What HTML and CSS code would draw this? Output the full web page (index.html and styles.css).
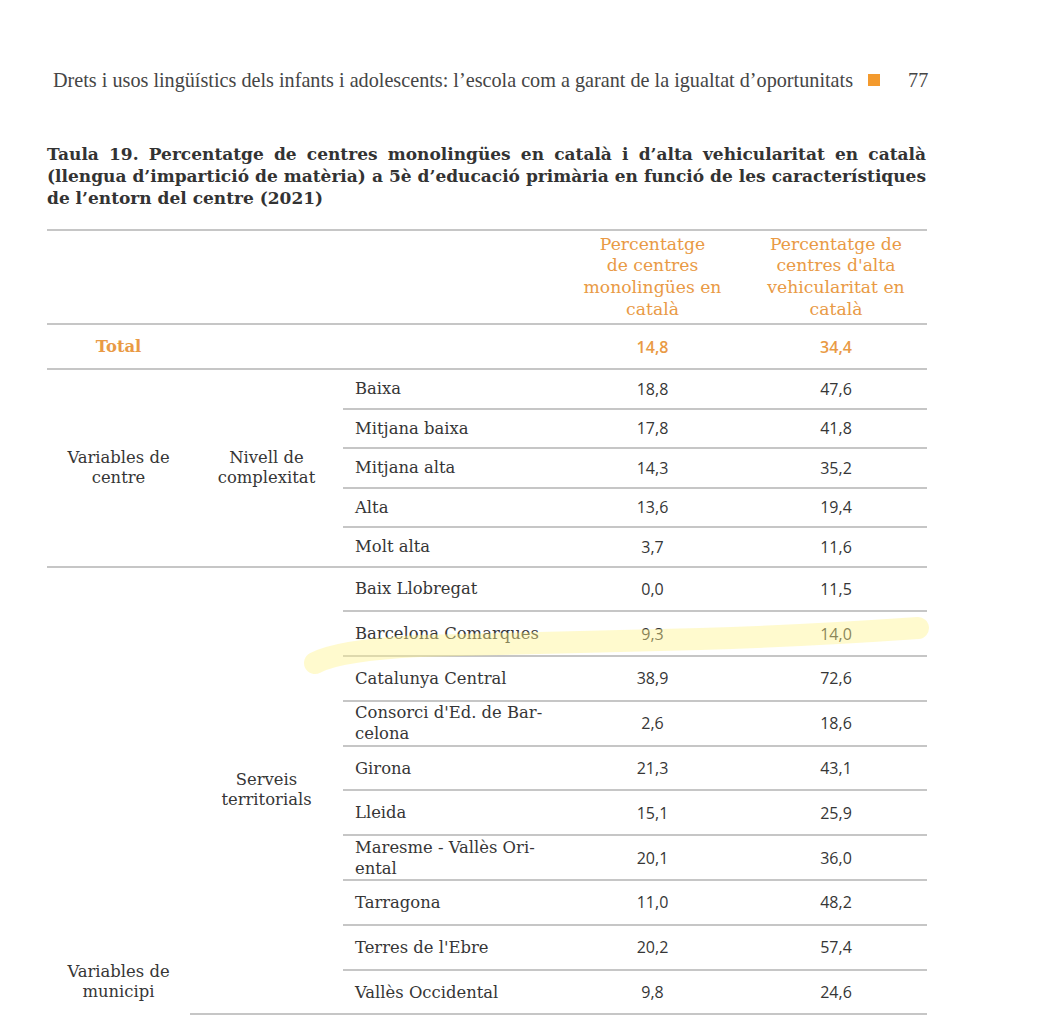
FILE: index.html
```html
<!DOCTYPE html>
<html lang="ca">
<head>
<meta charset="utf-8">
<title>Taula 19</title>
<link rel="stylesheet" href="styles.css">
</head>
<body>
<div class="page">
  <header class="running">
    <span class="run-title">Drets i usos lingüístics dels infants i adolescents: l’escola com a garant de la igualtat d’oportunitats</span>
    <span class="run-mark"></span>
    <span class="run-page">77</span>
  </header>

  <h1 class="caption">Taula 19. Percentatge de centres monolingües en català i d’alta vehicularitat en català (llengua d’impartició de matèria) a 5è d’educació primària en funció de les característiques de l’entorn del centre (2021)</h1>

  <table class="data">
    <colgroup>
      <col class="c1"><col class="c2"><col class="c3"><col class="c4"><col class="c5">
    </colgroup>
    <thead>
      <tr class="head-row">
        <th colspan="3"></th>
        <th class="h-val">Percentatge<br>de centres<br>monolingües en<br>català</th>
        <th class="h-val">Percentatge de<br>centres d'alta<br>vehicularitat en<br>català</th>
      </tr>
    </thead>
    <tbody>
      <tr class="total-row">
        <td class="total-label">Total</td>
        <td></td>
        <td></td>
        <td class="num total-num">14,8</td>
        <td class="num total-num">34,4</td>
      </tr>

      <tr class="row-s">
        <td class="group" rowspan="5">Variables de<br>centre</td>
        <td class="group" rowspan="5">Nivell de<br>complexitat</td>
        <td class="label">Baixa</td><td class="num">18,8</td><td class="num">47,6</td>
      </tr>
      <tr class="row-s"><td class="label">Mitjana baixa</td><td class="num">17,8</td><td class="num">41,8</td></tr>
      <tr class="row-s"><td class="label">Mitjana alta</td><td class="num">14,3</td><td class="num">35,2</td></tr>
      <tr class="row-s"><td class="label">Alta</td><td class="num">13,6</td><td class="num">19,4</td></tr>
      <tr class="row-s"><td class="label">Molt alta</td><td class="num">3,7</td><td class="num">11,6</td></tr>

      <tr class="row-l">
        <td class="group group-open" rowspan="10">Variables de<br>municipi</td>
        <td class="group" rowspan="10">Serveis<br>territorials</td>
        <td class="label">Baix Llobregat</td><td class="num">0,0</td><td class="num">11,5</td>
      </tr>
      <tr class="row-l"><td class="label">Barcelona Comarques</td><td class="num">9,3</td><td class="num">14,0</td></tr>
      <tr class="row-l"><td class="label">Catalunya Central</td><td class="num">38,9</td><td class="num">72,6</td></tr>
      <tr class="row-l"><td class="label two">Consorci d'Ed. de Bar-<br>celona</td><td class="num">2,6</td><td class="num">18,6</td></tr>
      <tr class="row-l"><td class="label">Girona</td><td class="num">21,3</td><td class="num">43,1</td></tr>
      <tr class="row-l"><td class="label">Lleida</td><td class="num">15,1</td><td class="num">25,9</td></tr>
      <tr class="row-l"><td class="label two">Maresme - Vallès Ori-<br>ental</td><td class="num">20,1</td><td class="num">36,0</td></tr>
      <tr class="row-l"><td class="label">Tarragona</td><td class="num">11,0</td><td class="num">48,2</td></tr>
      <tr class="row-l"><td class="label">Terres de l'Ebre</td><td class="num">20,2</td><td class="num">57,4</td></tr>
      <tr class="row-l"><td class="label">Vallès Occidental</td><td class="num">9,8</td><td class="num">24,6</td></tr>
    </tbody>
  </table>

  <svg class="highlight" width="1043" height="1016" viewBox="0 0 1043 1016" aria-hidden="true">
    <path d="M315,663 C330,655 360,649 420,646 C520,643 600,642 700,639 C800,636 860,632 918,628" fill="none" stroke="#fff48a" stroke-opacity="0.42" stroke-width="22" stroke-linecap="round"/>
  </svg>
</div>
</body>
</html>
```

FILE: styles.css
```css
html, body {
  margin: 0;
  padding: 0;
  background: #ffffff;
}

body {
  font-family: "DejaVu Serif", "Liberation Serif", serif;
  color: #363636;
}

.page {
  position: relative;
  width: 1043px;
  height: 1016px;
  overflow: hidden;
}

.running {
  display: flex;
  align-items: center;
  padding: 70px 0 0 53px;
  height: 20px;
  font-family: "Liberation Serif", serif;
  font-size: 20.2px;
  color: #454545;
}

.run-mark {
  width: 12px;
  height: 12px;
  background: #f39a2e;
  margin-left: 15px;
}

.run-page {
  margin-left: 28px;
}

.caption {
  margin: 53px 0 0 47px;
  width: 879px;
  font-family: "DejaVu Serif", serif;
  font-weight: bold;
  font-size: 17px;
  line-height: 22px;
  text-align: justify;
  color: #333333;
}

.data {
  margin: 20px 0 0 47px;
  width: 880px;
  border-collapse: collapse;
  table-layout: fixed;
  font-size: 16.4px;
  border-top: 2px solid #c6c6c6;
}

.c1 { width: 143px; }
.c2 { width: 153px; }
.c3 { width: 217px; }
.c4 { width: 185px; }
.c5 { width: 182px; }

.data th,
.data td {
  padding: 0;
  vertical-align: middle;
}

.head-row th {
  height: 92px;
  border-bottom: 2px solid #c6c6c6;
}

.h-val {
  color: #e99a45;
  font-weight: normal;
  font-size: 17.2px;
  line-height: 21.7px;
  text-align: center;
}

.total-row td {
  height: 43px;
  border-bottom: 2px solid #c6c6c6;
}

.total-label {
  color: #e99a45;
  font-weight: bold;
  text-align: center;
}

.num.total-num {
  color: #e99a45;
  font-weight: 600;
}

.group {
  text-align: center;
  line-height: 20px;
  border-bottom: 2px solid #c6c6c6;
}

.group-open {
  border-bottom: none;
  vertical-align: bottom !important;
  padding-bottom: 12px !important;
}

.label {
  padding-left: 12px !important;
  line-height: 21px;
  border-bottom: 2px solid #c6c6c6;
}

.num {
  font-family: "Open Sans", "Noto Sans", sans-serif;
  font-size: 16px;
  text-align: center;
  border-bottom: 2px solid #c6c6c6;
}

.row-s td.label { height: 37.5px; }
.row-l td.label { height: 42.8px; }

.highlight {
  position: absolute;
  left: 0;
  top: 0;
  pointer-events: none;
}
```
